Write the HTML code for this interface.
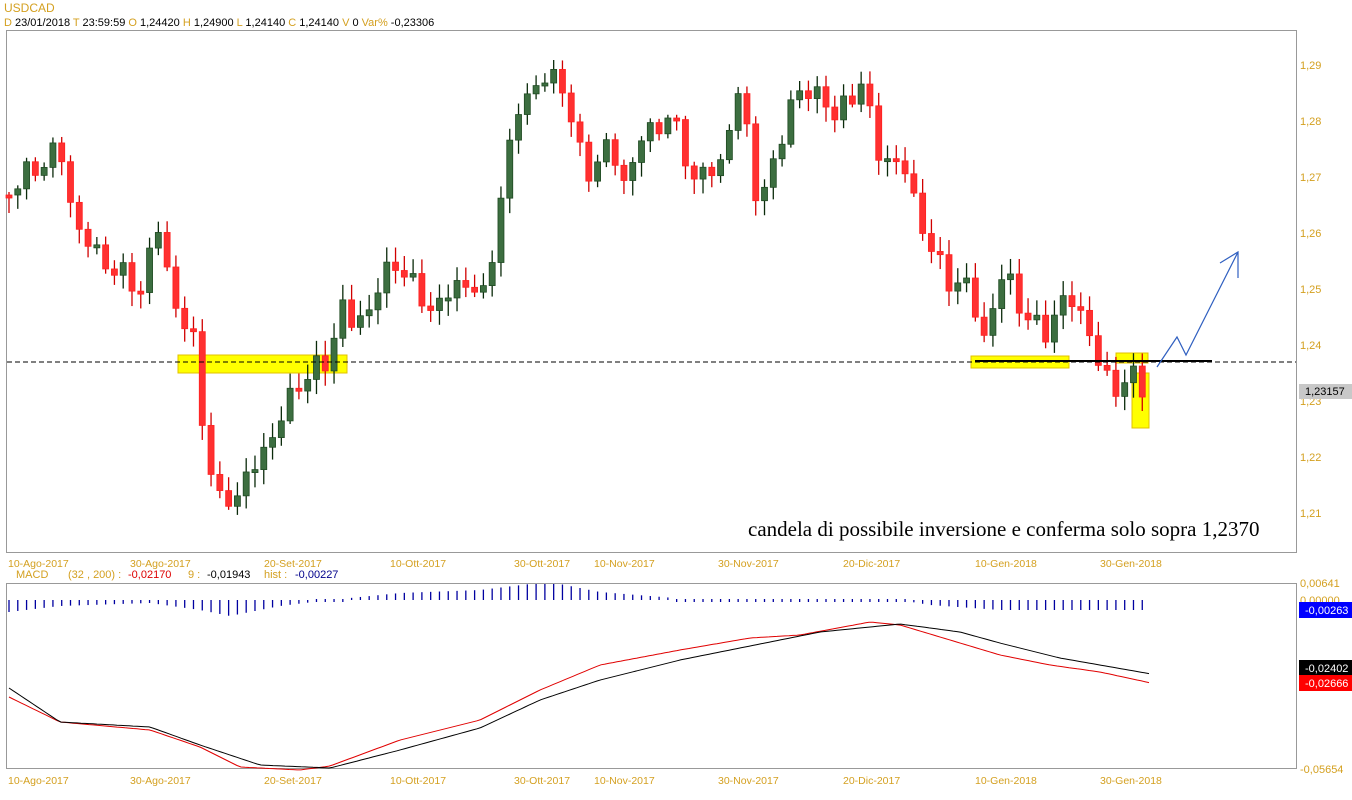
<!DOCTYPE html>
<html><head><meta charset="utf-8"><style>
html,body{margin:0;padding:0;background:#fff;width:1352px;height:800px;overflow:hidden}
svg{display:block}
text{font-family:"Liberation Sans",sans-serif}
</style></head><body>
<svg id="s" width="1352" height="800" xmlns="http://www.w3.org/2000/svg">
<text x="4" y="12" font-size="12" fill="#d4a020">USDCAD</text>
<text y="26" font-size="11"><tspan x="4" fill="#d4a020">D</tspan><tspan fill="#000"> 23/01/2018 </tspan><tspan fill="#d4a020"> T</tspan><tspan fill="#000"> 23:59:59 </tspan><tspan fill="#d4a020">  O</tspan><tspan fill="#000"> 1,24420 </tspan><tspan fill="#d4a020"> H</tspan><tspan fill="#000"> 1,24900 </tspan><tspan fill="#d4a020"> L</tspan><tspan fill="#000"> 1,24140 </tspan><tspan fill="#d4a020"> C</tspan><tspan fill="#000"> 1,24140 </tspan><tspan fill="#d4a020">  V</tspan><tspan fill="#000"> 0 </tspan><tspan fill="#d4a020">  Var%</tspan><tspan fill="#000"> -0,23306</tspan></text>
<rect x="6.5" y="30.5" width="1290" height="522" fill="none" stroke="#999"/>
<rect x="6.5" y="583.5" width="1290" height="185" fill="none" stroke="#999"/>
<g id="ov"></g>
<g id="cd"></g>
<line x1="7" y1="362" x2="1296" y2="362" stroke="#000" stroke-dasharray="5,3"/>
<line x1="975" y1="361" x2="1212" y2="361" stroke="#000" stroke-width="2"/>
<polyline points="1157,367 1177,337 1186,355 1238,252" fill="none" stroke="#2f5fc0" stroke-width="1.2"/>
<polyline points="1220,263 1238,252 1238,278" fill="none" stroke="#2f5fc0" stroke-width="1.2"/>
<g font-size="11" fill="#d4a020">
<text x="1300" y="69">1,29</text><text x="1300" y="125">1,28</text><text x="1300" y="181">1,27</text><text x="1300" y="237">1,26</text><text x="1300" y="293">1,25</text><text x="1300" y="349">1,24</text><text x="1300" y="405">1,23</text><text x="1300" y="461">1,22</text><text x="1300" y="517">1,21</text>
</g>
<rect x="1299" y="384" width="53" height="15" fill="#c8c8c8"/><text x="1305" y="395" font-size="11">1,23157</text>
<text x="748" y="536" font-size="21" style="font-family:'Liberation Serif',serif">candela di possibile inversione e conferma solo sopra 1,2370</text>
<g font-size="10.5" fill="#d4a020" id="dates1"></g>
<text y="578" font-size="11"><tspan x="16" fill="#d4a020">MACD</tspan><tspan x="68" fill="#d4a020">(32 , 200) :</tspan><tspan x="128" fill="#d00">-0,02170</tspan><tspan x="188" fill="#d4a020">9 :</tspan><tspan x="207" fill="#000">-0,01943</tspan><tspan x="264" fill="#d4a020">hist :</tspan><tspan x="295" fill="#00008b">-0,00227</tspan></text>
<text x="1300" y="587" font-size="11" fill="#d4a020">0,00641</text>
<text x="1300" y="604" font-size="11" fill="#d4a020">0,00000</text>
<rect x="1299" y="602" width="53" height="16" fill="#0000ff"/><text x="1305" y="614" font-size="11" fill="#fff">-0,00263</text>
<rect x="1299" y="660" width="53" height="16" fill="#000"/><text x="1305" y="672" font-size="11" fill="#fff">-0,02402</text>
<rect x="1299" y="675" width="53" height="16" fill="#f00"/><text x="1305" y="687" font-size="11" fill="#fff">-0,02666</text>
<text x="1300" y="773" font-size="11" fill="#d4a020">-0,05654</text>
<g id="hist"></g>
<polyline id="red" fill="none" stroke="#e00000" stroke-width="1"/>
<polyline id="blk" fill="none" stroke="#000" stroke-width="1"/>
</svg>
<script>
(function(){
var NS="http://www.w3.org/2000/svg";
function el(p,t,a){var e=document.createElementNS(NS,t);for(var k in a)e.setAttribute(k,a[k]);p.appendChild(e);return e;}
var ov=document.getElementById('ov');
[[178,355,169,18],[971,356,98,12],[1116,353,32,10],[1132,373,17,55]].forEach(function(r){el(ov,'rect',{x:r[0],y:r[1],width:r[2],height:r[3],fill:'#ffff00',stroke:'#e0c000','stroke-width':1});});
var ds=[[8,'10-Ago-2017'],[130,'30-Ago-2017'],[264,'20-Set-2017'],[390,'10-Ott-2017'],[514,'30-Ott-2017'],[594,'10-Nov-2017'],[718,'30-Nov-2017'],[843,'20-Dic-2017'],[975,'10-Gen-2018'],[1100,'30-Gen-2018']];
var d1=document.getElementById('dates1');
ds.forEach(function(d){el(d1,'text',{x:d[0],y:567}).textContent=d[1];var t=el(d1,'text',{x:d[0],y:784});t.textContent=d[1];});
var kp=[[9,190],[60,148],[75,225],[100,258],[140,290],[160,222],[172,300],[195,345],[205,445],[220,505],[240,490],[270,440],[300,380],[330,360],[340,300],[355,330],[395,260],[430,310],[465,280],[485,300],[500,200],[520,100],[545,80],[560,75],[585,175],[610,145],[625,185],[640,140],[670,115],[695,180],[720,165],[740,85],[755,190],[770,185],[790,100],[820,90],[835,120],[860,80],[880,155],[905,170],[930,250],[950,280],[970,290],[985,340],[1005,265],[1025,320],[1045,330],[1070,295],[1085,320],[1100,370],[1120,390],[1135,375],[1151,395]];
function interp(pts,x){for(var i=0;i<pts.length-1;i++){if(x<=pts[i+1][0]){var a=pts[i],b=pts[i+1];return a[1]+(b[1]-a[1])*(x-a[0])/(b[0]-a[0]);}}return pts[pts.length-1][1];}
var cd=document.getElementById('cd');var prev=195;var n=130;
for(var i=0;i<n;i++){var x=9+i*8.785;var c=interp(kp,x)+Math.sin(i*2.3)*9+Math.cos(i*1.7)*5;var o=prev;
var tp=Math.min(o,c),bt=Math.max(o,c);if(bt-tp<3){bt=tp+3;}
var hi=tp-3-Math.abs(Math.sin(i*3.1))*12,lo=bt+3+Math.abs(Math.cos(i*2.7))*12;
var up=c<o;
el(cd,'line',{x1:x,y1:hi,x2:x,y2:lo,stroke:up?'#0a2a0a':'#d00000','stroke-width':1.3});
el(cd,'rect',{x:x-3,y:tp,width:6,height:bt-tp,fill:up?'#3c6e40':'#ff3030',stroke:up?'#1f4a22':'#ff2020','stroke-width':0.8});
prev=c;}
var h=document.getElementById('hist');
var hp=[[9,612],[60,606],[150,603],[200,610],[230,616],[280,606],[330,600],[400,593],[480,590],[530,584],[560,584],[600,592],[700,600],[800,600],[900,600],[930,605],[1000,610],[1151,610]];
for(var i=0;i<n;i++){var x=9+i*8.785;var y=interp(hp,x);var y1=Math.min(600,y),y2=Math.max(600,y);if(y2-y1<2){y1=599;y2=602;}el(h,'line',{x1:x,y1:y1,x2:x,y2:y2,stroke:'#0000a0','stroke-width':1.3});}
var rp=[[9,697],[60,722],[150,730],[200,747],[240,767],[300,770],[330,766],[400,740],[480,720],[540,690],[600,665],[680,650],[750,638],[800,635],[870,622],[900,625],[950,640],[1000,655],[1050,665],[1100,672],[1151,683]];
var bp=[[9,688],[60,722],[150,727],[200,745],[260,765],[330,768],[400,750],[480,728],[540,700],[600,680],[680,660],[760,644],[820,632],[900,624],[960,632],[1000,643],[1060,658],[1151,674]];
function pts(p){var s='';for(var x=9;x<=1151;x+=4)s+=x+','+interp(p,x).toFixed(1)+' ';return s;}
document.getElementById('red').setAttribute('points',pts(rp));
document.getElementById('blk').setAttribute('points',pts(bp));
})();
</script>
</body></html>
